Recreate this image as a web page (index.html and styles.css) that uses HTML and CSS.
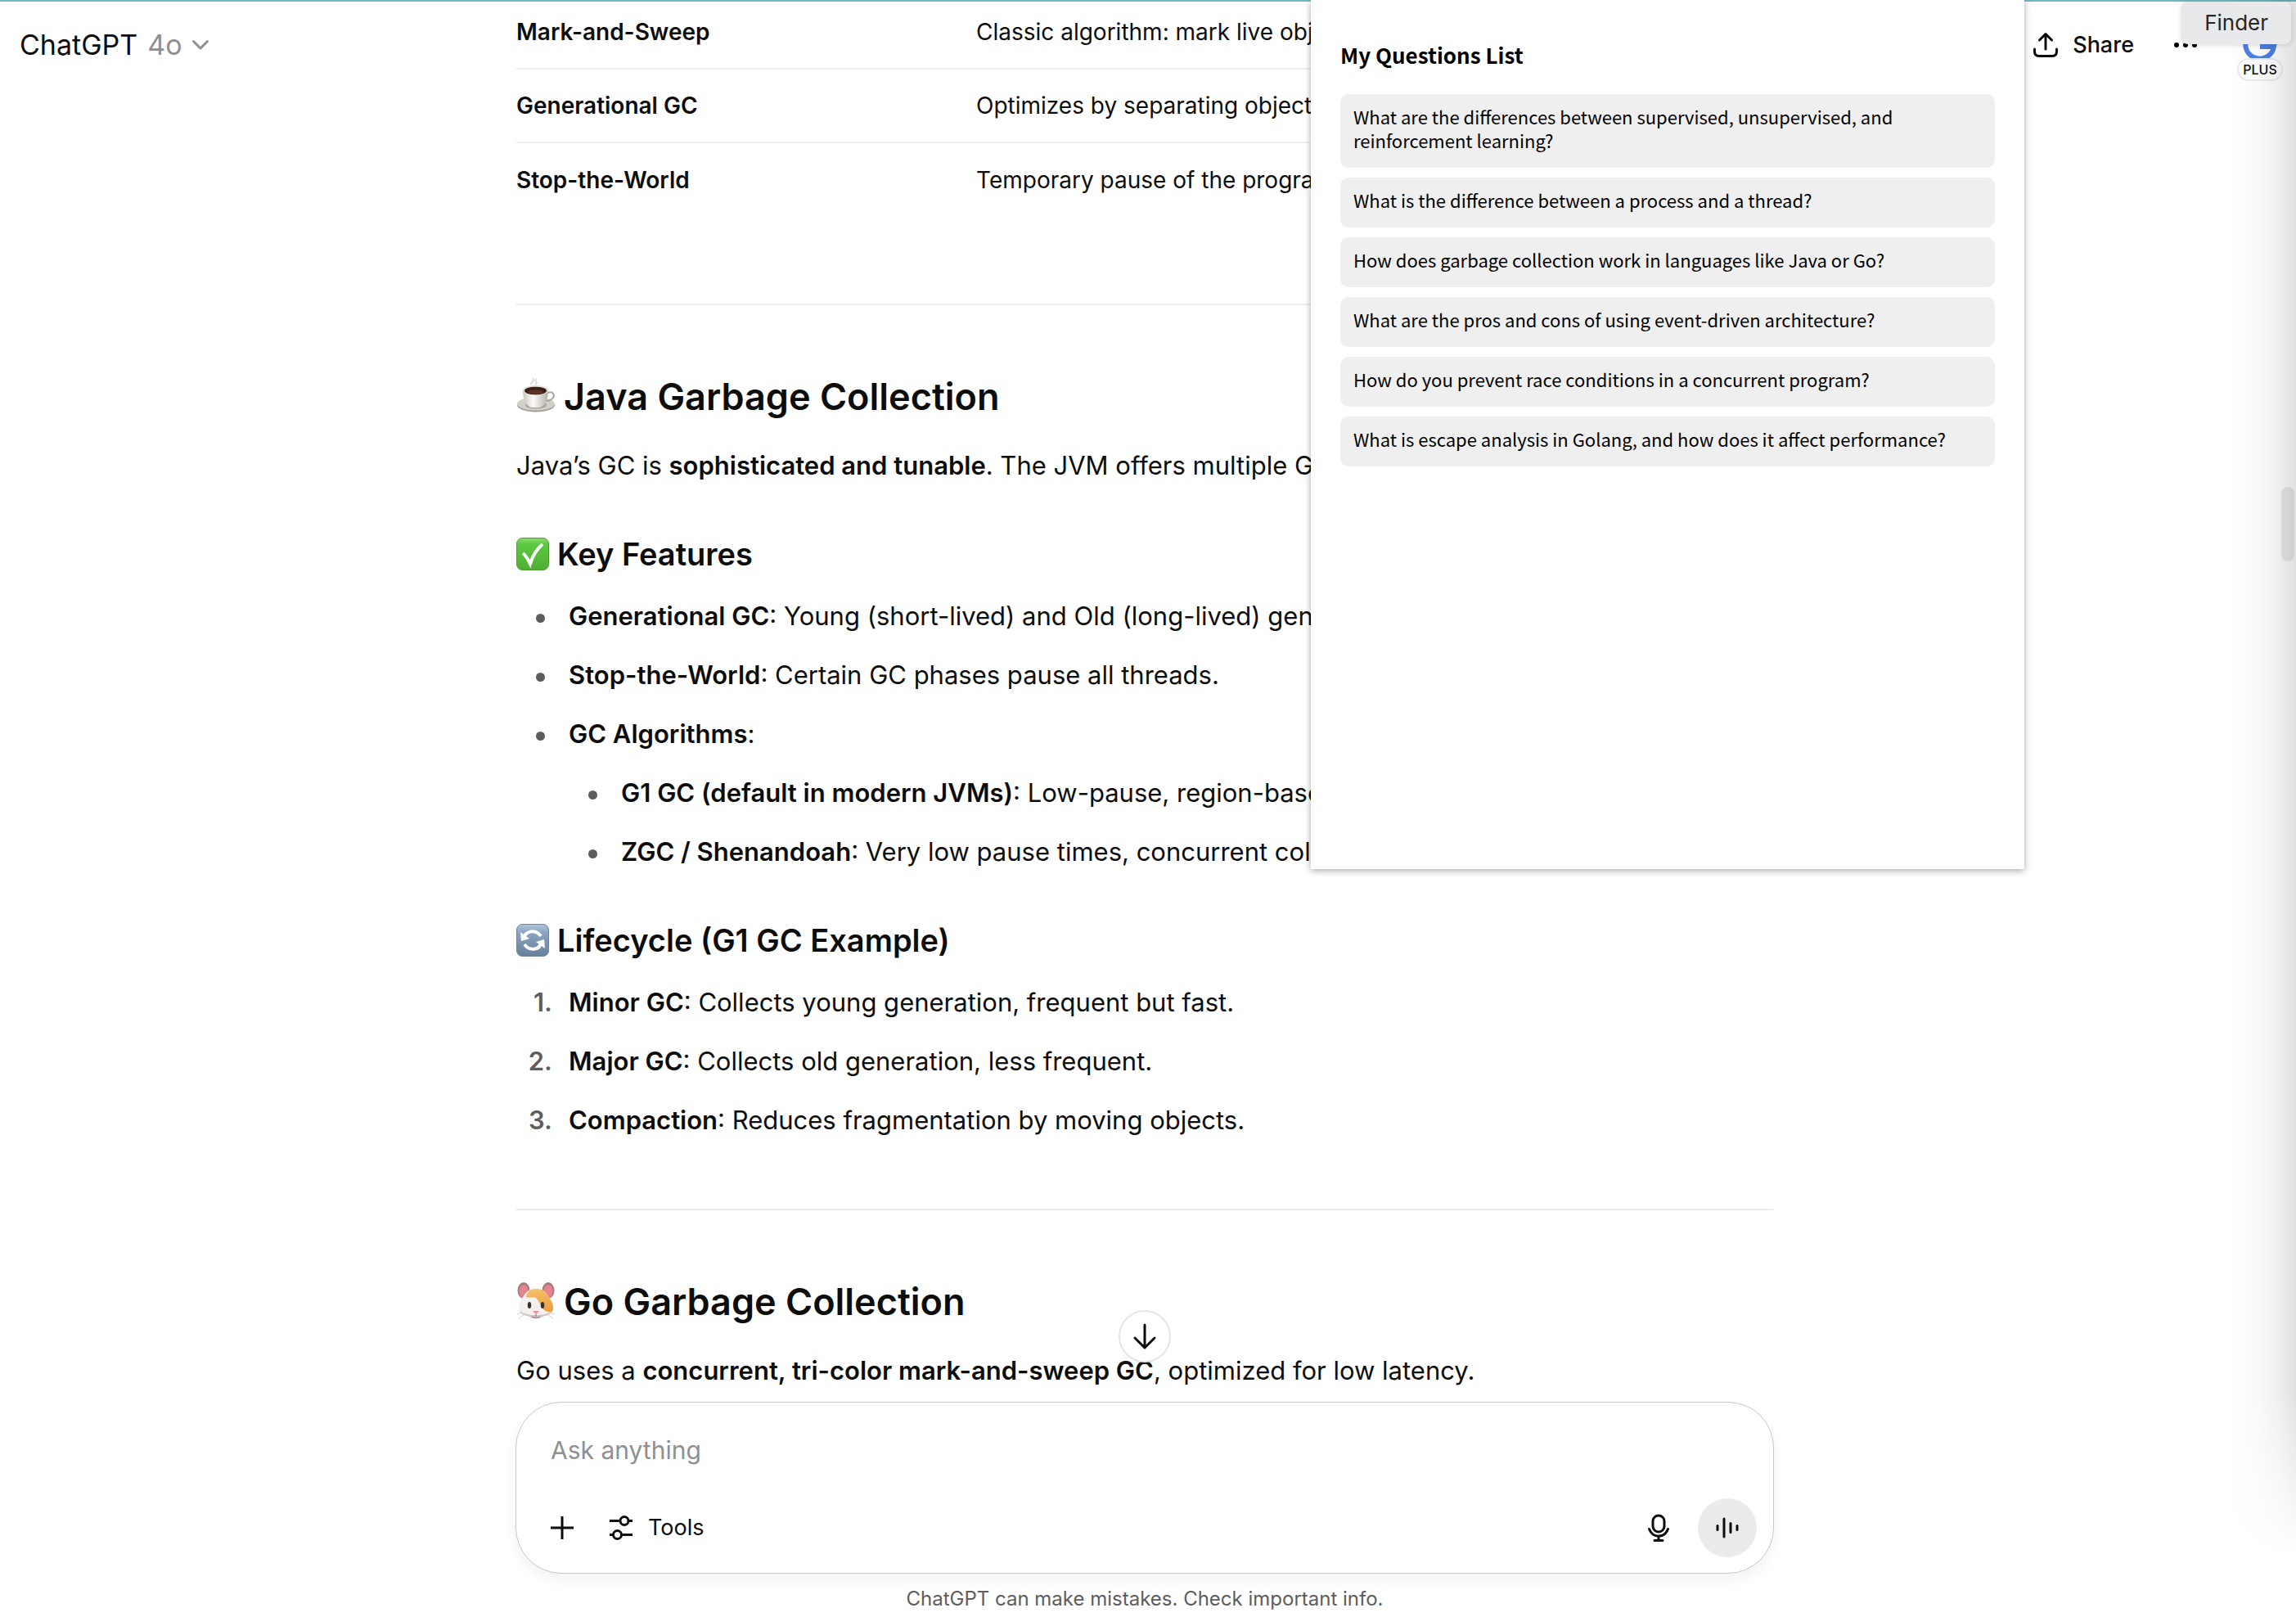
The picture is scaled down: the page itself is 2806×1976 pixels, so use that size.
FILE: index.html
```
<!DOCTYPE html>
<html lang="en">
<head>
  <meta charset="UTF-8">
  <meta name="viewport" content="width=device-width, initial-scale=1.0">
  <title>ChatGPT</title>
  <link rel="stylesheet" href="styles.css">
</head>
<body>

<div class="app">
  <header class="header">
    <button class="model-button">
      ChatGPT <span class="model-name">4o</span>
      <svg class="chevron" viewBox="0 0 20 12"><path d="M1.5 1.5 L10 10 L18.500 1.500"/></svg>
    </button>
    <div class="header-actions">
      <button class="share-button">
        <svg class="icon-share" viewBox="0 0 30 30">
          <path d="M15 20 V2 M7.500 9 L15 1.500 L22.500 9 M1.500 20 V23 Q1.500 28.500 7 28.500 H23 Q28.500 28.500 28.500 23 V20"/>
        </svg>
        Share
      </button>
      <button class="more-button" aria-label="More">
        <svg class="icon-more" viewBox="0 0 40 40"><circle cx="9" cy="20" r="3"/><circle cx="20" cy="20" r="3"/><circle cx="31" cy="20" r="3"/></svg>
      </button>
      <button class="avatar">
        <svg class="icon-avatar" viewBox="0 0 42 42"><path d="M35 10 A17.500 17.500 0 1 0 38 23 H21"/></svg>
        <span class="plan">PLUS</span>
      </button>
    </div>
  </header>

  <main class="scroll-area">
    <article class="thread">
      <table class="terms">
        <tr><th scope="row">Mark-and-Sweep</th><td>Classic algorithm: mark live objects</td></tr>
        <tr><th scope="row">Generational GC</th><td>Optimizes by separating objects</td></tr>
        <tr><th scope="row">Stop-the-World</th><td>Temporary pause of the program</td></tr>
      </table>

      <hr>

      <h2>
        <!-- coffee cup -->
        <svg class="emoji-large" viewBox="0 0 48 48">
          <defs>
            <linearGradient id="cup" x1="0" x2="1"><stop offset="0" stop-color="#c9c5bc"/><stop offset=".4" stop-color="#fbfaf6"/><stop offset="1" stop-color="#b5b1a8"/></linearGradient>
          </defs>
          <ellipse cx="24" cy="34" rx="23" ry="8.500" fill="#a19e98"/>
          <ellipse cx="24" cy="32.500" rx="23" ry="8" fill="#d2cfc8"/>
          <ellipse cx="24" cy="34" rx="13" ry="4.500" fill="#aaa69e"/>
          <path d="M38 19 C46 16 48 23 43 27 C41 28.500 38 29 36 29" fill="none" stroke="#a8a59e" stroke-width="2"/>
          <path d="M8 16 C8 27 12 36 19 37 H28 C35 36 39 27 39 16 Z" fill="url(#cup)"/>
          <ellipse cx="23.500" cy="16" rx="15.500" ry="6" fill="#dedbd4"/>
          <ellipse cx="23.500" cy="16.500" rx="13.500" ry="4.800" fill="#3c2116"/>
          <ellipse cx="23.500" cy="18" rx="9" ry="2.500" fill="#5c3724"/>
          <path d="M19 9 C15 6 24 6 20 1 M23 9 C28 6 20 4 25 2" fill="none" stroke="#dcdcdc" stroke-width="2"/>
        </svg>
        Java Garbage Collection
      </h2>
      <p>Java’s GC is <strong>sophisticated and tunable</strong>. The JVM offers multiple GC</p>

      <h3>
        <!-- green check -->
        <svg class="emoji" viewBox="0 0 40 40">
          <defs>
            <linearGradient id="green" x2="0" y2="1"><stop offset="0" stop-color="#8edb70"/><stop offset=".2" stop-color="#5cc840"/><stop offset="1" stop-color="#4fae32"/></linearGradient>
          </defs>
          <rect x=".5" y=".5" width="39" height="39" rx="7" fill="url(#green)" stroke="#4b9a32"/>
          <path d="M8 19 C12 22 14 26 17 32 C20 22 25 14 32 8" fill="none" stroke="#fff" stroke-width="4"/>
        </svg>
        Key Features
      </h3>
      <ul class="bullets">
        <li><strong>Generational GC</strong>: Young (short-lived) and Old (long-lived) gen</li>
        <li><strong>Stop-the-World</strong>: Certain GC phases pause all threads.</li>
        <li><strong>GC Algorithms</strong>:
          <ul class="bullets">
            <li><strong>G1 GC (default in modern JVMs)</strong>: Low-pause, region-based</li>
            <li><strong>ZGC / Shenandoah</strong>: Very low pause times, concurrent coll</li>
          </ul>
        </li>
      </ul>

      <h3>
        <!-- refresh arrows -->
        <svg class="emoji" viewBox="0 0 40 40">
          <defs>
            <linearGradient id="steel" x2="0" y2="1"><stop offset="0" stop-color="#b3c6da"/><stop offset=".25" stop-color="#8ba5c0"/><stop offset="1" stop-color="#667f9c"/></linearGradient>
          </defs>
          <rect x=".5" y=".5" width="39" height="39" rx="7" fill="url(#steel)" stroke="#6c8099"/>
          <path d="M9 18 C11 8 24 6 30 15 M31 22 C29 32 16 34 10 25" fill="none" stroke="#fff" stroke-width="4"/>
          <path d="M5 10 L6 21 L16 18 Z M35 30 L34 19 L24 22 Z" fill="#fff"/>
        </svg>
        Lifecycle (G1 GC Example)
      </h3>
      <ol class="numbers">
        <li><strong>Minor GC</strong>: Collects young generation, frequent but fast.</li>
        <li><strong>Major GC</strong>: Collects old generation, less frequent.</li>
        <li><strong>Compaction</strong>: Reduces fragmentation by moving objects.</li>
      </ol>

      <hr>

      <h2>
        <!-- hamster face -->
        <svg class="emoji-large" viewBox="0 0 48 48">
          <defs>
            <linearGradient id="fur" x2="0" y2="1"><stop offset="0" stop-color="#f6c26d"/><stop offset="1" stop-color="#ee9a3b"/></linearGradient>
            <clipPath id="face"><path d="M24 8 C35 8 37 14 41 20 C48 30 46 40 34 41 C29 45 19 45 14 41 C2 40 0 30 7 20 C11 14 13 8 24 8 Z"/></clipPath>
          </defs>
          <ellipse cx="9" cy="10" rx="7.500" ry="10" fill="#a9787f"/>
          <ellipse cx="39" cy="10" rx="7.500" ry="10" fill="#a9787f"/>
          <ellipse cx="9" cy="11" rx="5.500" ry="8" fill="#e5858f"/>
          <ellipse cx="39" cy="11" rx="5.500" ry="8" fill="#e5858f"/>
          <g clip-path="url(#face)">
            <rect width="48" height="48" fill="#f4f0ed"/>
            <path d="M12 18 C14 4 34 4 38 14 C48 24 48 32 43 36 C32 38 31 28 25 20 C21 16 17 20 12 18 Z" fill="url(#fur)"/>
            <path d="M3 34 C12 42 36 42 45 34 V46 H3 Z" fill="#cfc8c6"/>
          </g>
          <ellipse cx="16" cy="28" rx="2.200" ry="4" fill="#33302f"/>
          <ellipse cx="32" cy="28" rx="2.200" ry="4" fill="#33302f"/>
          <path d="M20 35 H28 L24 39 Z" fill="#ef8f96"/>
          <path d="M24 39 V42 M19 42 Q24 45 29 42" fill="none" stroke="#9c7b7b" stroke-width="1.200"/>
          <path d="M8 37 L1 39 M9 40 L3 44 M40 37 L47 39 M39 40 L45 44" stroke="#d5d0d0" stroke-width="1"/>
        </svg>
        Go Garbage Collection
      </h2>
      <p>Go uses a <strong>concurrent, tri-color mark-and-sweep GC</strong>, optimized for low latency.</p>
    </article>
  </main>

  <footer class="bottom">
    <button class="scroll-down" aria-label="Scroll to bottom">
      <svg class="icon-down" viewBox="0 0 28 32"><path d="M14 2 V29 M2 18 L14 30 L26 18"/></svg>
    </button>
    <form class="composer">
      <input class="prompt" type="text" placeholder="Ask anything" aria-label="Ask anything">
      <div class="composer-row">
        <button type="button" class="tool" aria-label="Add">
          <svg class="icon-plus" viewBox="0 0 28 28"><path d="M14 0 V28 M0 14 H28"/></svg>
        </button>
        <button type="button" class="tool">
          <svg class="icon-tools" viewBox="0 0 30 30"><path d="M1 6.500 H13 M25 6.500 H29 M1 23.500 H5 M16 23.500 H29"/><circle cx="19" cy="6.500" r="5"/><circle cx="10.500" cy="23.500" r="5"/></svg>
          Tools
        </button>
        <span class="spacer"></span>
        <button type="button" class="tool" aria-label="Dictate">
          <svg class="icon-mic" viewBox="0 0 26 34"><rect x="6" y="2" width="14" height="20" rx="7"/><path d="M1.500 18.500 C6 30 20 30 24.500 18.500 M13 27 V32 M8 32.500 H18"/></svg>
        </button>
        <button type="button" class="voice" aria-label="Voice mode">
          <svg class="icon-voice" viewBox="0 0 28 28"><path d="M2 11.500 V16.500 M10 3 V25 M18 8.500 V19.500 M26 11.500 V16.500"/></svg>
        </button>
      </div>
    </form>
    <p class="notice">ChatGPT can make mistakes. Check important info.</p>
  </footer>
</div>

<aside class="questions">
  <h1>My Questions List</h1>
  <ul>
    <li><button>What are the differences between supervised, unsupervised, and reinforcement learning?</button></li>
    <li><button>What is the difference between a process and a thread?</button></li>
    <li><button>How does garbage collection work in languages like Java or Go?</button></li>
    <li><button>What are the pros and cons of using event-driven architecture?</button></li>
    <li><button>How do you prevent race conditions in a concurrent program?</button></li>
    <li><button>What is escape analysis in Golang, and how does it affect performance?</button></li>
  </ul>
</aside>

<div class="edge-shadow"></div>
<div class="scroll-thumb"></div>
<div class="tooltip" role="tooltip">Finder</div>

</body>
</html>
```
FILE: styles.css
```
*,
*::before {
  box-sizing: border-box;
}

body {
  position: relative;
  height: 100vh;
  margin: 0;
  overflow: hidden;
  background-color: #fff;
  color: #0d0d0d;
  font-family: Inter, "Liberation Sans", sans-serif;
  font-size: 31px;
  line-height: 56px;
}

button {
  padding: 0;
  border: none;
  background: none;
  color: inherit;
  font: inherit;
  cursor: pointer;
}

svg {
  display: block;
  flex: none;
  overflow: visible;
}

h1, h2, h3, p, ul, ol {
  margin: 0;
  padding: 0;
}

strong {
  font-weight: 600;
}

.app {
  display: flex;
  flex-direction: column;
  height: 100vh;
  padding-right: 8px;
  border-top: 2px solid #6db9bf;
}

/* header floats above the conversation */
.header {
  position: absolute;
  top: 2px;
  left: 0;
  right: 0;
  display: flex;
  justify-content: space-between;
  align-items: center;
  height: 106px;
  padding: 0 16px 0 24px;
}

.model-button {
  display: flex;
  align-items: center;
  gap: 12px;
  font-size: 34px;
}

.model-name {
  color: #8f8f8f;
}

.chevron {
  width: 20px;
  height: 12px;
  fill: none;
  stroke: #8f8f8f;
  stroke-width: 3;
  stroke-linecap: round;
  stroke-linejoin: round;
}

.header-actions {
  display: flex;
  align-items: center;
  gap: 43px;
}

.share-button {
  display: flex;
  align-items: center;
  gap: 18px;
  font-size: 27px;
  font-weight: 500;
}

.icon-share {
  width: 30px;
  height: 30px;
  fill: none;
  stroke: #0d0d0d;
  stroke-width: 3;
  stroke-linecap: round;
  stroke-linejoin: round;
}

.icon-more {
  width: 40px;
  height: 40px;
}

.avatar {
  position: relative;
  display: flex;
  justify-content: center;
  width: 56px;
}

.icon-avatar {
  width: 42px;
  height: 42px;
  fill: none;
  stroke: #4f80e8;
  stroke-width: 6;
}

.plan {
  position: absolute;
  top: 37px;
  left: 0;
  width: 56px;
  border: 2px solid #ececec;
  border-radius: 14px;
  background-color: #fff;
  font-size: 16px;
  font-weight: 500;
  line-height: 24px;
}

/* conversation */
.scroll-area {
  flex: 1;
  min-height: 0;
  overflow: hidden;
}

.thread {
  max-width: 1536px;
  margin: -8px auto 0;
}

.terms {
  width: 100%;
  margin-bottom: 107px;
  border-collapse: collapse;
  font-size: 28px;
  line-height: 40px;
  text-align: left;
}

.terms th,
.terms td {
  height: 90px;
  padding: 0;
  border-bottom: 2px solid #f0f0f0;
}

.terms tr:last-child th,
.terms tr:last-child td {
  border-bottom: none;
}

.terms th {
  width: 562px;
  font-weight: 600;
}

hr {
  height: 2px;
  margin: 80px 0;
  border: none;
  background-color: #ececec;
}

h2,
h3 {
  display: flex;
  align-items: center;
  gap: 10px;
  font-weight: 600;
}

h2 {
  margin-bottom: 24px;
  font-size: 45px;
  line-height: 64px;
}

h3 {
  margin: 52px 0 20px;
  font-size: 38px;
}

.emoji-large {
  width: 48px;
  height: 48px;
}

.emoji {
  width: 40px;
  height: 40px;
}

.bullets,
.numbers {
  display: flex;
  flex-direction: column;
  gap: 16px;
  padding-left: 64px;
  list-style: none;
}

.bullets .bullets {
  margin-top: 16px;
}

.bullets li::before {
  content: "";
  display: inline-block;
  width: 11px;
  height: 11px;
  margin: 0 29px 0 -40px;
  border-radius: 50%;
  background-color: #5d5d5d;
  vertical-align: middle;
}

.numbers {
  counter-reset: step;
}

.numbers li::before {
  counter-increment: step;
  content: counter(step) ".";
  display: inline-block;
  width: 64px;
  margin-left: -64px;
  padding-right: 20px;
  color: #5d5d5d;
  font-weight: 600;
  text-align: right;
}

/* composer */
.bottom {
  position: relative;
  width: 100%;
  max-width: 1538px;
  margin: 0 auto;
}

.scroll-down {
  position: absolute;
  left: 50%;
  bottom: calc(100% + 48px);
  display: flex;
  justify-content: center;
  align-items: center;
  width: 64px;
  height: 64px;
  margin-left: -32px;
  border: 2px solid #e5e5e5;
  border-radius: 50%;
  background-color: #fff;
}

.icon-down {
  width: 28px;
  height: 32px;
  fill: none;
  stroke: #0d0d0d;
  stroke-width: 3;
  stroke-linecap: round;
  stroke-linejoin: round;
}

.composer {
  padding: 30px 20px 19px 42px;
  border: 1px solid #c8c8c8;
  border-radius: 56px;
  background-color: #fff;
  box-shadow: 0 8px 16px rgba(0, 0, 0, 0.05);
}

.prompt {
  display: block;
  width: 100%;
  height: 56px;
  margin-bottom: 31px;
  padding: 0;
  border: none;
  outline: none;
  font: inherit;
  font-size: 30px;
}

.prompt::placeholder {
  color: #8f8f8f;
}

.composer-row {
  display: flex;
  align-items: center;
}

.spacer {
  flex: 1;
}

.tool {
  display: flex;
  align-items: center;
  gap: 18px;
  margin-right: 43px;
  font-size: 27px;
}

.icon-plus,
.icon-tools,
.icon-mic {
  width: 28px;
  height: 28px;
  fill: none;
  stroke: #0d0d0d;
  stroke-width: 3;
}

.icon-tools {
  width: 30px;
  height: 30px;
}

.icon-mic {
  width: 26px;
  height: 34px;
  stroke-linecap: round;
}

.tool:nth-last-child(2) {
  margin-right: 35px;
}

.voice {
  display: flex;
  justify-content: center;
  align-items: center;
  width: 72px;
  height: 72px;
  border-radius: 50%;
  background-color: #ebebeb;
}

.icon-voice {
  width: 28px;
  height: 28px;
  stroke: #0d0d0d;
  stroke-width: 3;
  stroke-linecap: round;
}

.notice {
  padding: 11px 0 2px;
  color: #5d5d5d;
  font-size: 24px;
  line-height: 40px;
  text-align: center;
}

/* questions popup */
.questions {
  position: absolute;
  top: 0;
  right: 332px;
  width: 872px;
  min-height: 1062px;
  padding: 47px 36px;
  background-color: #fff;
  color: #000;
  font-family: "Noto Sans CJK KR", "Noto Sans", sans-serif;
  box-shadow: 0 2px 8px rgba(0, 0, 0, 0.35);
}

.questions h1 {
  margin-bottom: 28px;
  font-size: 26px;
  font-weight: 700;
  line-height: 40px;
}

.questions ul {
  display: flex;
  flex-direction: column;
  gap: 12px;
  list-style: none;
}

.questions li {
  display: flex;
}

.questions button {
  flex: 1;
  padding: 13px 16px 19px;
  border-radius: 10px;
  background-color: #efefef;
  font-size: 22px;
  line-height: 29px;
  text-align: left;
}

/* shade of the window sitting past the right edge */
.edge-shadow {
  position: absolute;
  top: 0;
  right: 0;
  width: 86px;
  height: 1900px;
  background: linear-gradient(to left, rgba(0, 0, 0, 0.12), rgba(0, 0, 0, 0.06) 28%, rgba(0, 0, 0, 0.02) 56%, transparent);
  -webkit-mask-image: linear-gradient(to top, transparent, rgba(0, 0, 0, 0.4) 80px, #000 200px);
  mask-image: linear-gradient(to top, transparent, rgba(0, 0, 0, 0.4) 80px, #000 200px);
  pointer-events: none;
}

.scroll-thumb {
  position: absolute;
  top: 595px;
  right: 2px;
  width: 16px;
  height: 91px;
  border-radius: 8px;
  background-color: rgba(0, 0, 0, 0.08);
}

.tooltip {
  position: absolute;
  top: 2px;
  right: 6px;
  padding: 0 28px;
  border-radius: 8px;
  background-color: #e7e9ea;
  box-shadow: 0 1px 6px rgba(0, 0, 0, 0.15);
  color: #262626;
  font-size: 26px;
  line-height: 52px;
}
```
